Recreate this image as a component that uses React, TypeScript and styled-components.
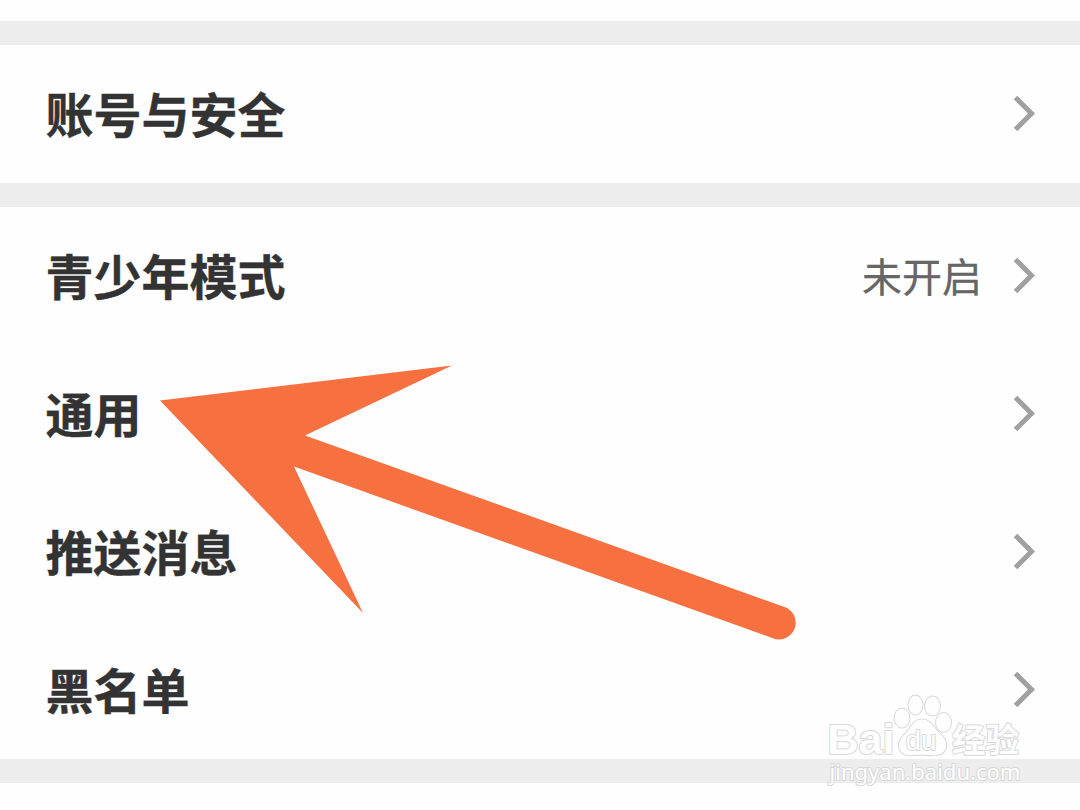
import * as React from 'react';
import styled, { createGlobalStyle } from 'styled-components';

const colors = {
  white: '#fefefe',
  gap: '#ededed',
  label: '#333333',
  value: '#666666',
  chevron: '#a0a0a0',
  arrow: '#f67040',
}

const GlobalStyle = createGlobalStyle`
  body {
    margin: 0;
    overflow: hidden;
    background-color: ${colors.white};
    font-family: "Noto Sans CJK SC", sans-serif;
  }
`

const Page = styled.main`
  position: relative;
  display: flex;
  flex-direction: column;
  box-sizing: border-box;
  width: 1080px;
  height: 810px;
  padding-top: 21px;
  overflow: hidden;
  background-color: ${colors.white};
`

const Divider = styled.div`
  flex: none;
  height: 24px;
  background-color: ${colors.gap};
`

const Row = styled.div`
  display: flex;
  flex: none;
  align-items: center;
  box-sizing: border-box;
  height: 138px;
  padding: 0 44px 0 45.5px;
`

const Label = styled.span`
  flex: 1;
  padding-bottom: 4px;
  color: ${colors.label};
  font-size: 48px;
  font-weight: 700;
  line-height: 72px;
  -webkit-text-stroke: 0.4px ${colors.label};
`

const Value = styled.span`
  margin-right: 30px;
  padding-bottom: 2px;
  color: ${colors.value};
  font-size: 40px;
  line-height: 60px;
  -webkit-text-stroke: 0.3px ${colors.value};
`

const Chevron = styled.svg`
  display: block;
  width: 24px;
  height: 40px;
`

const Arrow = styled.svg`
  position: absolute;
  top: 360px;
  left: 155px;
`

const Watermark = styled.svg`
  position: absolute;
  top: 690px;
  left: 820px;
  fill: #fefefe;
  stroke: #d8d8d8;
  stroke-width: 2px;
  stroke-linejoin: round;
  paint-order: stroke;
`

const Brand = styled.text`
  font-family: "Liberation Sans", sans-serif;
  font-size: 43px;
  font-weight: 700;
`

const BrandInner = styled.text`
  font-family: "Liberation Sans", sans-serif;
  font-size: 28px;
`

const BrandSuffix = styled.text`
  font-family: "Noto Sans CJK SC", sans-serif;
  font-size: 33px;
  font-weight: 700;
`

const Site = styled.text`
  font-family: "Noto Sans", sans-serif;
  font-size: 21px;
`

interface ItemProps {
  label: string
  value?: string
}

const Item: React.FC<ItemProps> = ({label, value}) => (
  <Row>
    <Label>{label}</Label>
    {value && <Value>{value}</Value>}
    <Chevron viewBox="0 0 24 40">
      <path d="M3.500 3.500 L19.500 19.500 L3.500 35.500" fill="none" stroke={colors.chevron} strokeWidth="5" />
    </Chevron>
  </Row>
);

const App: React.FC = () => (
  <Page>
    <GlobalStyle />
    <Divider />
    <Item label="账号与安全" />
    <Divider />
    <Item label="青少年模式" value="未开启" />
    <Item label="通用" />
    <Item label="推送消息" />
    <Item label="黑名单" />
    <Divider />
    <Arrow width="650" height="290" viewBox="155 360 650 290">
      <path
        d="M160 400.5 L452 365.5 L305 435.5 L784.5 607 A16.5 16.5 0 0 1 773.5 638.5 L294 466.5 L363 613 Z"
        fill={colors.arrow}
      />
    </Arrow>
    <Watermark width="210" height="110" viewBox="820 690 210 110">
      <Brand x="827.5" y="754" textLength="67" lengthAdjust="spacingAndGlyphs">Bai</Brand>
      <ellipse cx="902" cy="718" rx="7.5" ry="9.5" />
      <ellipse cx="915.5" cy="705" rx="7" ry="9.5" />
      <ellipse cx="932.5" cy="706" rx="7.5" ry="9.5" />
      <ellipse cx="943.5" cy="722.5" rx="7.5" ry="9.5" />
      <path d="M922 719.5 C930 719.5 933 726 938 732 C944 737 947 741 946 747 C944 757 933 755.5 922 754.5 C911 755.5 901 757 899 747 C898 741 902 737 907 732 C912 726 914 719.5 922 719.5 Z" />
      <BrandInner x="905.5" y="750" textLength="31" lengthAdjust="spacingAndGlyphs">du</BrandInner>
      <BrandSuffix x="952" y="751.5" textLength="67" lengthAdjust="spacingAndGlyphs">经验</BrandSuffix>
      <Site x="829.5" y="780" textLength="191" lengthAdjust="spacingAndGlyphs">jingyan.baidu.com</Site>
    </Watermark>
  </Page>
);

export default App;
